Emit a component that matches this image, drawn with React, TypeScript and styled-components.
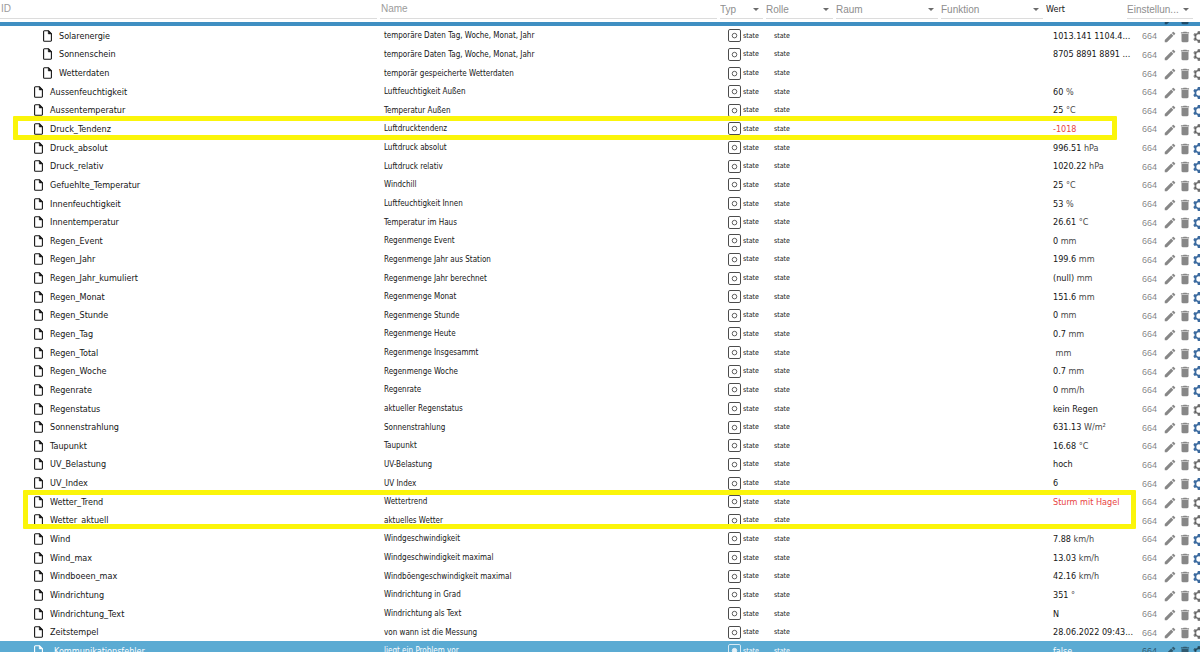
import React from "react";
import styled, { createGlobalStyle, css } from "styled-components";
import { MdDelete, MdEdit } from "react-icons/md";

const GlobalStyle = createGlobalStyle`
  * { box-sizing: border-box; }
  body { margin: 0; background: #fff; }
`;

const tableFont = `"DejaVu Sans Condensed", "DejaVu Sans", Verdana, sans-serif`;
const uiFont = `"Liberation Sans", Arial, sans-serif`;

interface StateRow {
  id: string;
  name: string;
  value?: string;
  unit?: string;
  nested?: boolean;
  alert?: boolean;
  custom?: boolean;
  selected?: boolean;
}

const rows: StateRow[] = [
  { id: "Solarenergie", name: "temporäre Daten Tag, Woche, Monat, Jahr", value: "1013.141 1104.4...", nested: true },
  { id: "Sonnenschein", name: "temporäre Daten Tag, Woche, Monat, Jahr", value: "8705 8891 8891 ...", nested: true },
  { id: "Wetterdaten", name: "temporär gespeicherte Wetterdaten", nested: true },
  { id: "Aussenfeuchtigkeit", name: "Luftfeuchtigkeit Außen", value: "60", unit: "%", custom: true },
  { id: "Aussentemperatur", name: "Temperatur Außen", value: "25", unit: "°C", custom: true },
  { id: "Druck_Tendenz", name: "Luftdrucktendenz", value: "-1018", alert: true },
  { id: "Druck_absolut", name: "Luftdruck absolut", value: "996.51", unit: "hPa", custom: true },
  { id: "Druck_relativ", name: "Luftdruck relativ", value: "1020.22", unit: "hPa", custom: true },
  { id: "Gefuehlte_Temperatur", name: "Windchill", value: "25", unit: "°C" },
  { id: "Innenfeuchtigkeit", name: "Luftfeuchtigkeit Innen", value: "53", unit: "%", custom: true },
  { id: "Innentemperatur", name: "Temperatur im Haus", value: "26.61", unit: "°C", custom: true },
  { id: "Regen_Event", name: "Regenmenge Event", value: "0", unit: "mm", custom: true },
  { id: "Regen_Jahr", name: "Regenmenge Jahr aus Station", value: "199.6", unit: "mm", custom: true },
  { id: "Regen_Jahr_kumuliert", name: "Regenmenge Jahr berechnet", value: "(null)", unit: "mm", custom: true },
  { id: "Regen_Monat", name: "Regenmenge Monat", value: "151.6", unit: "mm", custom: true },
  { id: "Regen_Stunde", name: "Regenmenge Stunde", value: "0", unit: "mm", custom: true },
  { id: "Regen_Tag", name: "Regenmenge Heute", value: "0.7", unit: "mm", custom: true },
  { id: "Regen_Total", name: "Regenmenge Insgesammt", unit: "mm", custom: true },
  { id: "Regen_Woche", name: "Regenmenge Woche", value: "0.7", unit: "mm", custom: true },
  { id: "Regenrate", name: "Regenrate", value: "0", unit: "mm/h", custom: true },
  { id: "Regenstatus", name: "aktueller Regenstatus", value: "kein Regen" },
  { id: "Sonnenstrahlung", name: "Sonnenstrahlung", value: "631.13", unit: "W/m²", custom: true },
  { id: "Taupunkt", name: "Taupunkt", value: "16.68", unit: "°C", custom: true },
  { id: "UV_Belastung", name: "UV-Belastung", value: "hoch" },
  { id: "UV_Index", name: "UV Index", value: "6", custom: true },
  { id: "Wetter_Trend", name: "Wettertrend", value: "Sturm mit Hagel", alert: true },
  { id: "Wetter_aktuell", name: "aktuelles Wetter" },
  { id: "Wind", name: "Windgeschwindigkeit", value: "7.88", unit: "km/h", custom: true },
  { id: "Wind_max", name: "Windgeschwindigkeit maximal", value: "13.03", unit: "km/h", custom: true },
  { id: "Windboeen_max", name: "Windböengeschwindigkeit maximal", value: "42.16", unit: "km/h", custom: true },
  { id: "Windrichtung", name: "Windrichtung in Grad", value: "351", unit: "°" },
  { id: "Windrichtung_Text", name: "Windrichtung als Text", value: "N" },
  { id: "Zeitstempel", name: "von wann ist die Messung", value: "28.06.2022 09:43..." },
  { id: "_Kommunikationsfehler", name: "liegt ein Problem vor", value: "false", selected: true },
];

const Page = styled.main`
  position: relative;
  height: 100vh;
  overflow: hidden;
`;

const Table = styled.table`
  display: flex;
  flex-direction: column;
  height: 100%;
  font-family: ${tableFont};
  color: #151515;
`;

const columns = css`
  display: grid;
  grid-template-columns:
    minmax(0, 380fr) minmax(0, 340fr)
    46px 70px 105px 105px 81px 73px;
`;

const Head = styled.thead`
  display: block;
  flex: none;
`;

const HeadRow = styled.tr`
  ${columns}
  height: 22px;
`;

const HeadCell = styled.th`
  display: block;
  padding: 0 3px 3px 0;
  font-weight: normal;
  text-align: left;
`;

const ValueHead = styled(HeadCell)`
  font-size: 9px;
  line-height: 18px;
`;

const SettingsHead = styled(HeadCell)`
  padding-right: 7px;
`;

const fieldStyle = css`
  display: block;
  width: 100%;
  height: 19px;
  margin: 0;
  border: 0;
  border-bottom: 1px solid #dcdcdc;
  border-radius: 0;
  outline: 0;
  background: transparent;
  font-family: ${uiFont};
  font-size: 10px;
  color: #8e8e8e;
`;

const FilterInput = styled.input`
  ${fieldStyle}
  padding: 0 0 2px 1px;

  &::placeholder {
    color: #9c9c9c;
    opacity: 1;
  }
`;

const SelectBox = styled.div`
  position: relative;
`;

const FilterSelect = styled.select`
  ${fieldStyle}
  appearance: none;
  padding: 0;
`;

const Caret = styled.svg`
  position: absolute;
  top: 8px;
  right: 4px;
  width: 6px;
  height: 3px;
  fill: #6b6b6b;
  pointer-events: none;
`;

const Body = styled.tbody`
  display: grid;
  flex: 1;
  min-height: 0;
  grid-template-rows: 4px repeat(${rows.length - 1}, minmax(0, 1fr)) 11px;
`;

const Row = styled.tr<{ $selected?: boolean }>`
  ${columns}
  align-items: center;
  min-height: 18px;
  background: ${(p) => (p.$selected ? "#5babd3" : "transparent")};
  color: ${(p) => (p.$selected ? "#fff" : "inherit")};
`;

const ScrolledRow = styled.tr`
  display: flex;
  align-items: flex-end;
  justify-content: flex-end;
  height: 4px;
  overflow: hidden;
  background: #3f8fc2;
`;

const ScrolledCell = styled.td`
  display: flex;
  gap: 1px;
  padding: 0 8px 0 0;
  color: #1f4a68;
`;

const Cell = styled.td`
  padding: 1px 0 0 4px;
  font-size: 8px;
  line-height: 16px;
  white-space: nowrap;
`;

const NameCell = styled(Cell)`
  padding-top: 2px;
  overflow: hidden;
`;

const IdCell = styled(Cell)<{ $nested?: boolean }>`
  display: flex;
  align-items: center;
  gap: 7px;
  padding-left: ${(p) => (p.$nested ? 43 : 34)}px;
  overflow: hidden;
  font-size: 9px;
`;

const TypeCell = styled(Cell)`
  display: flex;
  align-items: center;
  gap: 2px;
  padding-left: 8px;
  font-size: 7px;
`;

const RoleCell = styled(Cell)`
  padding-left: 8px;
  font-size: 7px;
`;

const ValueCell = styled(Cell)<{ $alert?: boolean }>`
  padding-left: 7px;
  font-size: 9px;
  white-space: pre;
  color: ${(p) => (p.$alert ? "#e8433f" : "inherit")};
`;

const Unit = styled.span`
  color: #484848;
`;

const ActionCell = styled(Cell)`
  display: flex;
  align-items: center;
  padding: 3px 0 0 15px;
  overflow: hidden;
  font-family: ${uiFont};
  font-size: 9px;
  line-height: 15px;
  color: rgba(0, 0, 0, 0.52);
`;

const Rights = styled.span`
  flex: none;
  width: 21px;
`;

const IconButton = styled.button<{ $active?: boolean }>`
  display: block;
  flex: none;
  width: 14px;
  height: 14px;
  padding: 0;
  border: 0;
  background: none;
  color: ${(p) => (p.$active ? "#3b6a9f" : "#00000078")};

  svg {
    display: block;
  }
`;

const EditButton = styled(IconButton)`
  margin-right: 1px;
`;

const FileSvg = styled.svg`
  flex: none;
  width: 9px;
  height: 12px;
`;

const StateSvg = styled.svg`
  flex: none;
  width: 13px;
  height: 13px;
  opacity: 0.85;
`;

const Marker = styled.div`
  position: absolute;
  border: 5px solid #fbf50a;
  border-radius: 1px;
  pointer-events: none;
`;

const TendencyMarker = styled(Marker)`
  top: 116px;
  right: 83px;
  left: 13px;
  height: 24px;
`;

const WeatherMarker = styled(Marker)`
  top: 490px;
  right: 64px;
  left: 23px;
  height: 39px;
`;

const FileIcon = () => (
  <FileSvg viewBox="0 0 9 12" fill="none" stroke="currentColor" strokeWidth="1.1" aria-hidden="true">
    <path d="M1.4.8h4.1l2.9 2.9v6.7a.8.8 0 0 1-.8.8H1.4a.8.8 0 0 1-.8-.8V1.6a.8.8 0 0 1 .8-.8z" />
    <path d="M5.3.8v3.1h3.1z" fill="currentColor" strokeWidth="0.6" />
  </FileSvg>
);

const StateIcon = ({ filled }: { filled?: boolean }) => (
  <StateSvg viewBox="0 0 13 13" fill="none" stroke="currentColor" aria-hidden="true">
    <rect x="0.5" y="0.5" width="12" height="12" rx="1.4" strokeWidth="0.9" />
    <circle cx="6.5" cy="6.6" r="2.3" strokeWidth="0.8" fill={filled ? "currentColor" : "none"} />
  </StateSvg>
);

const toothAngles = [0, 60, 120, 180, 240, 300];

const GearIcon = () => (
  <svg width="14" height="14" viewBox="0 0 14 14" aria-hidden="true">
    <mask id="gear-hole">
      <rect width="14" height="14" fill="#fff" />
      <circle cx="7" cy="7" r="2.7" fill="#000" />
    </mask>
    <g fill="currentColor" mask="url(#gear-hole)">
      <circle cx="7" cy="7" r="4.4" />
      {toothAngles.map((angle) => (
        <path key={angle} d="M5.3 3.4L5.8 1.1h2.4l.5 2.3z" transform={`rotate(${angle} 7 7)`} />
      ))}
    </g>
  </svg>
);

const FilterDropdown = ({ label }: { label: string }) => (
  <SelectBox>
    <FilterSelect aria-label={label}>
      <option>{label}</option>
    </FilterSelect>
    <Caret viewBox="0 0 6 3" aria-hidden="true">
      <path d="M0 0h6L3 3z" />
    </Caret>
  </SelectBox>
);

const Actions = ({ custom }: { custom?: boolean }) => (
  <>
    <Rights>664</Rights>
    <EditButton type="button" aria-label="Bearbeiten">
      <MdEdit size={14} />
    </EditButton>
    <IconButton type="button" aria-label="Löschen">
      <MdDelete size={14} />
    </IconButton>
    <IconButton type="button" aria-label="Einstellungen" $active={custom}>
      <GearIcon />
    </IconButton>
  </>
);

export default function App() {
  return (
    <Page>
      <GlobalStyle />
      <Table>
        <Head>
          <HeadRow>
            {["ID", "Name"].map((label) => (
              <HeadCell key={label}>
                <FilterInput placeholder={label} aria-label={label} />
              </HeadCell>
            ))}
            {["Typ", "Rolle", "Raum", "Funktion"].map((label) => (
              <HeadCell key={label}>
                <FilterDropdown label={label} />
              </HeadCell>
            ))}
            <ValueHead>Wert</ValueHead>
            <SettingsHead>
              <FilterDropdown label="Einstellun..." />
            </SettingsHead>
          </HeadRow>
        </Head>
        <Body>
          <ScrolledRow aria-hidden="true">
            <ScrolledCell>
              <MdEdit size={14} />
              <MdDelete size={14} />
            </ScrolledCell>
          </ScrolledRow>
          {rows.map((row) => (
            <Row key={row.id} $selected={row.selected}>
              <IdCell $nested={row.nested}>
                <FileIcon />
                {row.id}
              </IdCell>
              <NameCell>{row.name}</NameCell>
              <TypeCell>
                <StateIcon filled={row.selected} />
                state
              </TypeCell>
              <RoleCell>state</RoleCell>
              <Cell />
              <Cell />
              <ValueCell $alert={row.alert}>
                {row.value}
                {row.unit && <Unit> {row.unit}</Unit>}
              </ValueCell>
              <ActionCell>
                <Actions custom={row.custom} />
              </ActionCell>
            </Row>
          ))}
        </Body>
      </Table>
      <TendencyMarker />
      <WeatherMarker />
    </Page>
  );
}
